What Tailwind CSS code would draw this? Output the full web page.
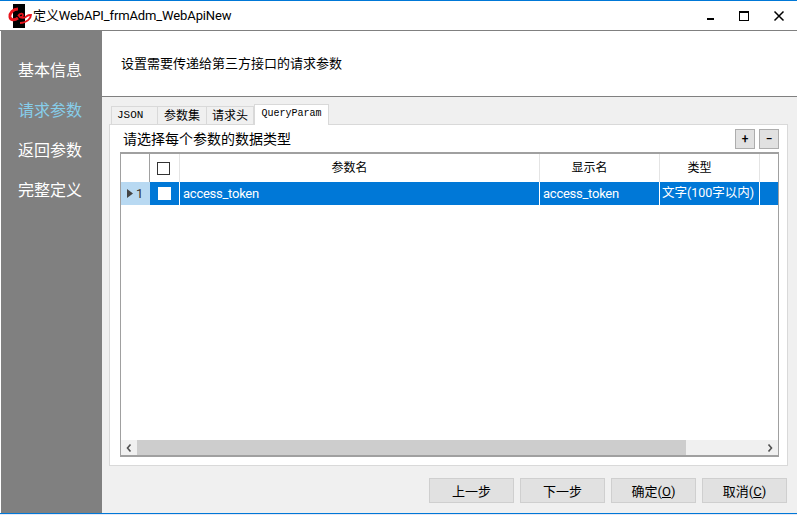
<!DOCTYPE html>
<html lang="zh-CN">
  <head>
    <meta charset="UTF-8" />
    <title>定义WebAPI_frmAdm_WebApiNew</title>
    <script src="https://cdn.jsdelivr.net/npm/@tailwindcss/browser@4"></script>
  </head>
  <body class="bg-white font-['Roboto','Noto_Sans_CJK_SC',sans-serif] text-[13px] text-black">
    <div class="flex h-[515px] w-[797px] flex-col overflow-hidden border-t border-[#0078d7]">
      <!-- title bar -->
      <div class="flex h-[29px] shrink-0 items-center bg-white">
        <svg class="ml-[8px] h-[24px] w-[24px] shrink-0" viewBox="0 0 24 24">
          <rect x="5" y="0" width="12" height="24" fill="#000" />
          <path d="M10 5C5 5 1.500 9 2 13c.5 3 4 4 8 1" fill="none" stroke="#e8141c" stroke-width="3" />
          <path d="M10 12c2-3 5-3 5-1s-3 3-4 1c2 3 6 2 8 0 1-1 3-1 4-1 0 3-4 8-11 8" fill="none" stroke="#e8141c" stroke-width="1.800" />
        </svg>
        <span class="ml-[1px] text-[13px] leading-none tracking-[-0.12px]">定义WebAPI_frmAdm_WebApiNew</span>
        <div class="ml-auto flex items-center">
          <svg class="h-[12px] w-[12px]" viewBox="0 0 12 12"><rect x="1" y="8" width="7" height="2" fill="#000" /></svg>
          <svg class="ml-[20px] h-[12px] w-[12px]" viewBox="0 0 12 12"><rect x="1.500" y="1.500" width="9" height="9" fill="none" stroke="#000" /><rect x="1" y="1" width="10" height="2" fill="#000" /></svg>
          <svg class="ml-[23px] mr-[12px] h-[12px] w-[12px]" viewBox="0 0 12 12"><path d="M1.500 1.500l9 9M10.500 1.500l-9 9" stroke="#000" stroke-width="1.500" /></svg>
        </div>
      </div>

      <div class="flex min-h-0 flex-1 border-t border-[#808080]">
        <!-- left step menu -->
        <div class="ml-[1px] flex w-[101px] shrink-0 flex-col gap-[16px] bg-[#808080] pt-[28px] pl-[17px] text-[16px] leading-[24px] text-white">
          <div>基本信息</div>
          <div class="text-[#87ceeb]">请求参数</div>
          <div>返回参数</div>
          <div>完整定义</div>
        </div>

        <div class="flex min-w-0 flex-1 flex-col bg-[#f0f0f0]">
          <div class="flex h-[66px] shrink-0 items-center border-b border-[#808080] bg-white pl-[19px] text-[13px]">
            设置需要传递给第三方接口的请求参数
          </div>

          <!-- tabs -->
          <div class="ml-[9px] mt-[7px] mr-[9px] flex h-[20px] items-end text-[12px] leading-none">
            <div class="flex h-[18px] w-[47px] items-center border border-b-0 border-[#d9d9d9] pl-[5px] font-['Liberation_Mono',monospace] text-[11px]">JSON</div>
            <div class="flex h-[18px] w-[49px] items-center justify-center border border-b-0 border-l-0 border-[#d9d9d9] text-[12px]">参数集</div>
            <div class="flex h-[18px] w-[47px] items-center justify-center border border-b-0 border-l-0 border-[#d9d9d9] text-[12px]">请求头</div>
            <div class="relative z-10 -mb-[1px] flex h-[21px] w-[75px] items-center justify-center border border-b-0 border-[#d9d9d9] bg-white pb-[3px] font-['Liberation_Mono',monospace] text-[10px]">QueryParam</div>
          </div>

          <!-- tab panel -->
          <div class="ml-[7px] mr-[9px] flex h-[342px] flex-col border border-[#d9d9d9] bg-white pr-[8px] pl-[10px]">
            <div class="flex h-[27px] shrink-0 items-center">
              <span class="ml-[3px] pt-[2px] text-[14px]">请选择每个参数的数据类型</span>
              <div class="ml-auto flex gap-[4px] pt-[1px]">
                <div class="flex h-[20px] w-[20px] items-center justify-center border border-[#adadad] bg-[#e1e1e1] text-[12px] leading-none font-medium">+</div>
                <div class="flex h-[20px] w-[20px] items-center justify-center border border-[#adadad] bg-[#e1e1e1] text-[12px] leading-none font-medium">−</div>
              </div>
            </div>

            <!-- data grid -->
            <div class="flex min-h-0 flex-1 flex-col border-t-2 border-r border-b-2 border-l border-[#a0a0a0]">
              <div class="flex h-[28px] shrink-0 text-[12px] leading-none">
                <div class="w-[29px] border-r border-[#a0a0a0]"></div>
                <div class="flex w-[30px] items-center justify-center border-r border-[#e4e4e4] pr-[2px]">
                  <div class="h-[13px] w-[13px] border border-[#333]"></div>
                </div>
                <div class="flex w-[360px] items-center justify-center border-r border-[#e4e4e4] pr-[20px]">参数名</div>
                <div class="flex w-[120px] items-center justify-center border-r border-[#e4e4e4] pr-[20px]">显示名</div>
                <div class="flex w-[100px] items-center justify-center border-r border-[#e4e4e4] pr-[20px]">类型</div>
              </div>
              <div class="flex h-[23px] shrink-0 bg-[#0078d7] text-[13px] leading-none text-white">
                <div class="flex w-[29px] items-center gap-[3px] bg-[#b8d9f2] pl-[6px] text-[#333]">
                  <svg class="h-[9px] w-[6px]" viewBox="0 0 6 9"><path d="M0 0l6 4.500L0 9z" fill="#444" /></svg>
                  <span>1</span>
                </div>
                <div class="flex w-[30px] items-center justify-center border-r border-white">
                  <div class="h-[13px] w-[13px] bg-white"></div>
                </div>
                <div class="flex w-[360px] items-center border-r border-white pl-[3px] tracking-[-0.25px]">access_token</div>
                <div class="flex w-[120px] items-center border-r border-white pl-[3px] tracking-[-0.25px]">access_token</div>
                <div class="flex w-[100px] items-center border-r border-white pl-[2px] text-[12.500px]">文字(100字以内)</div>
              </div>
              <div class="flex-1"></div>
              <!-- horizontal scrollbar -->
              <div class="flex h-[15px] shrink-0 items-stretch bg-[#f0f0f0]">
                <div class="flex w-[16px] items-center justify-center">
                  <svg class="h-[8px] w-[6px]" viewBox="0 0 6 8"><path d="M4.500 .5L1.500 4l3 3.500" fill="none" stroke="#505050" stroke-width="1.600" /></svg>
                </div>
                <div class="w-[549px] bg-[#cdcdcd]"></div>
                <div class="ml-auto flex w-[16px] items-center justify-center">
                  <svg class="h-[8px] w-[6px]" viewBox="0 0 6 8"><path d="M1.500 .5L4.500 4l-3 3.500" fill="none" stroke="#505050" stroke-width="1.600" /></svg>
                </div>
              </div>
            </div>
            <div class="h-[8px] shrink-0"></div>
          </div>

          <!-- footer buttons -->
          <div class="mt-[12px] flex justify-end gap-[6px] pr-[10px] text-[13px] leading-none">
            <div class="flex h-[25px] w-[85px] items-center justify-center border border-[#cfcfcf] bg-[#e1e1e1] pt-[1px]">上一步</div>
            <div class="flex h-[25px] w-[85px] items-center justify-center border border-[#cfcfcf] bg-[#e1e1e1] pt-[1px]">下一步</div>
            <div class="flex h-[25px] w-[85px] items-center justify-center border border-[#cfcfcf] bg-[#e1e1e1] pt-[1px]">确定(<span class="underline">O</span>)</div>
            <div class="flex h-[25px] w-[85px] items-center justify-center border border-[#cfcfcf] bg-[#e1e1e1] pt-[1px]">取消(<span class="underline">C</span>)</div>
          </div>
          <div class="flex-1"></div>
        </div>
      </div>
      <div class="h-[1px] shrink-0 bg-[#0078d7]"></div>
      <div class="h-[1px] shrink-0 bg-[#e8e8f4]"></div>
    </div>
  </body>
</html>
